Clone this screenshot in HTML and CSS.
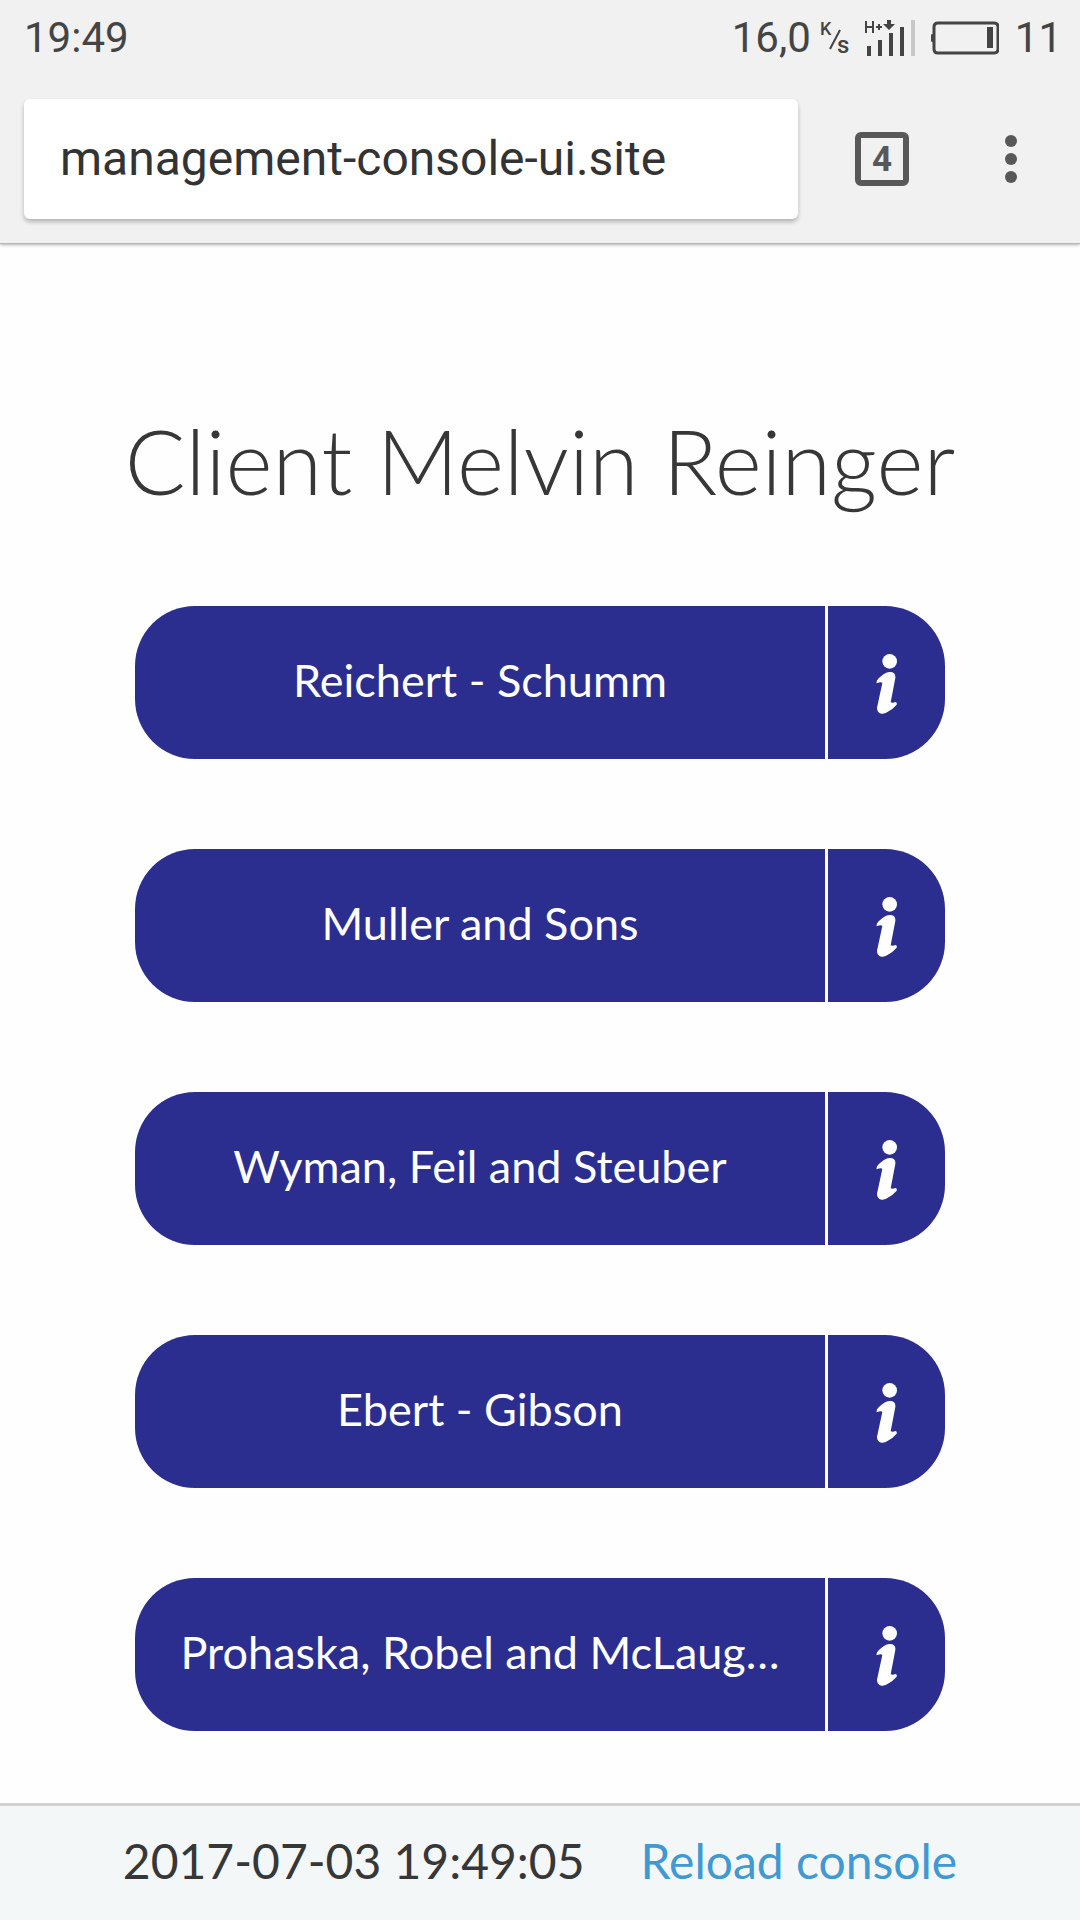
FILE: index.html
```html
<!DOCTYPE html>
<html lang="en">
<head>
<meta charset="utf-8">
<meta name="viewport" content="width=device-width, initial-scale=1">
<title>Management console</title>
<link rel="stylesheet" href="styles.css">
</head>
<body>
<svg class="sprite" aria-hidden="true">
  <symbol id="info" viewBox="108 42 66 180">
    <circle cx="149" cy="64" r="22"/>
    <path d="M110 130 Q108 122 116 115 Q134 97 148 96 Q168 95 166 114 L152 187 Q159 190 166 186 Q172 186 170 194 Q158 207 146 214 Q135 223 124 221 Q111 218 111 203 L127 129 Q124 124 110 130Z"/>
  </symbol>
</svg>
<header class="chrome">
  <div class="status">
    <span>19:49</span>
    <div class="status-right">
      <span>16,0</span>
      <svg class="rate" width="36" height="40" viewBox="0 0 36 40" role="img" aria-label="Kilobytes per second">
        <text x="1" y="17" class="rate-text">K</text>
        <path d="M11 31 L21 12" stroke="#444" stroke-width="2"/>
        <text x="18" y="35" class="rate-text rate-sec">s</text>
      </svg>
      <svg class="signal" width="50" height="36" viewBox="0 0 50 36" role="img" aria-label="Signal">
        <path d="M1 1v12M8 1v12M1 7h7M11 7h6M14 4v6" fill="none" stroke="#444" stroke-width="2"/>
        <path d="M22 0h4v4h4l-6 6-6-6h4z" fill="#444"/>
        <path d="M2 26h4v10h-4zM13 20h4v16h-4zM24 13h4v23h-4zM35 7h4v29h-4z" fill="#444"/>
        <path d="M46 0h4v36h-4z" fill="#c8c8c8"/>
      </svg>
      <svg class="battery" width="68" height="34" viewBox="0 0 68 34" role="img" aria-label="Battery">
        <path d="M0 14q0-1 2-1v8q-2 0-2-1z" fill="#444"/>
        <path d="M7 2h56q4 0 4 4v22q0 4-4 4h-56q-4 0-4-4v-22q0-4 4-4z" fill="none" stroke="#444" stroke-width="3"/>
        <path d="M56 6h6v21h-6z" fill="#444"/>
      </svg>
      <span>11</span>
    </div>
  </div>
  <div class="toolbar">
    <input class="address" type="text" aria-label="Address" value="management-console-ui.site">
    <button class="tabs" type="button" aria-label="4 open tabs">4</button>
    <button class="menu" type="button" aria-label="Menu">
      <svg width="12" height="48" viewBox="0 0 12 48" fill="#585858"><circle cx="6" cy="6" r="6"/><circle cx="6" cy="24" r="6"/><circle cx="6" cy="42" r="6"/></svg>
    </button>
  </div>
</header>
<main class="console">
  <h1 class="title">Client Melvin Reinger</h1>
  <div class="sites">
    <div class="site"><button class="site-name" type="button">Reichert - Schumm</button><button class="site-info" type="button" aria-label="Info"><svg class="info-icon"><use href="#info"/></svg></button></div>
    <div class="site"><button class="site-name" type="button">Muller and Sons</button><button class="site-info" type="button" aria-label="Info"><svg class="info-icon"><use href="#info"/></svg></button></div>
    <div class="site"><button class="site-name" type="button">Wyman, Feil and Steuber</button><button class="site-info" type="button" aria-label="Info"><svg class="info-icon"><use href="#info"/></svg></button></div>
    <div class="site"><button class="site-name" type="button">Ebert - Gibson</button><button class="site-info" type="button" aria-label="Info"><svg class="info-icon"><use href="#info"/></svg></button></div>
    <div class="site"><button class="site-name" type="button">Prohaska, Robel and McLaug…</button><button class="site-info" type="button" aria-label="Info"><svg class="info-icon"><use href="#info"/></svg></button></div>
  </div>
</main>
<footer class="footer">
  <time datetime="2017-07-03T19:49:05">2017-07-03 19:49:05</time>
  <a class="reload" href="#">Reload console</a>
</footer>
</body>
</html>
```
FILE: styles.css
```css
* { box-sizing: border-box; }
body {
  margin: 0;
  min-height: 100vh;
  display: flex;
  flex-direction: column;
  background: #fefefe;
  color: #373737;
  font-family: Lato, sans-serif;
}
button { border: 0; padding: 0; background: none; font: inherit; color: inherit; }
svg { display: block; flex: none; }
.sprite { position: absolute; width: 0; height: 0; }

.chrome {
  background: #f1f1f1;
  border-bottom: 1px solid #b4b4b4;
  box-shadow: 0 1px 3px rgba(0, 0, 0, .3);
  padding-bottom: 24px;
  font-family: Roboto, sans-serif;
}
.status {
  height: 75px;
  padding: 0 18px 0 24px;
  display: flex;
  justify-content: space-between;
  align-items: center;
  font-size: 42px;
  color: #444;
}
.status-right { display: flex; align-items: center; }
.rate { margin-left: 8px; }
.rate-text { font-size: 18px; font-weight: 500; fill: #444; }
.rate-sec { font-size: 24px; }
.signal { margin-left: 10px; }
.battery { margin: 0 16px; }
.toolbar {
  display: flex;
  align-items: center;
  padding: 24px 63px 0 24px;
}
.address {
  flex: 1;
  min-width: 0;
  height: 120px;
  padding: 0 36px 2px;
  border: 0;
  border-radius: 6px;
  background: #fff;
  box-shadow: 0 3px 4px rgba(0, 0, 0, .25);
  color: #333;
  font: 48px Roboto, sans-serif;
}
.tabs {
  width: 54px;
  height: 54px;
  margin: 0 96px 0 57px;
  padding-top: 2px;
  border: 6px solid #585858;
  border-radius: 6px;
  color: #585858;
  font-size: 35px;
  font-weight: 700;
  line-height: 40px;
}

.console {
  width: 75%;
  margin: 0 auto;
  padding: 158px 0 72px;
}
.title {
  margin: 0 -45px 88px;
  font-size: 90px;
  font-weight: 300;
  line-height: 116px;
  text-align: center;
}
.sites { display: flex; flex-direction: column; gap: 90px; }
.site { display: flex; gap: 3px; height: 153px; }
.site-name {
  flex: 1;
  min-width: 0;
  padding: 0 45px 6px;
  border-radius: 60px 0 0 60px;
  background: #2b2e8f;
  color: #fff;
  font-size: 45px;
  white-space: nowrap;
  overflow: hidden;
  text-overflow: ellipsis;
}
.site-info {
  width: 117px;
  padding-top: 3px;
  display: flex;
  align-items: center;
  justify-content: center;
  border-radius: 0 60px 60px 0;
  background: #2b2e8f;
}
.info-icon { width: 22px; height: 60px; fill: #fff; }

.footer {
  margin-top: auto;
  height: 117px;
  padding-bottom: 6px;
  border-top: 3px solid #d2d2d2;
  background: #f3f7f8;
  display: flex;
  align-items: center;
  justify-content: center;
  gap: 56px;
  font-size: 48px;
}
.reload { color: #4099d0; text-decoration: none; }
```
